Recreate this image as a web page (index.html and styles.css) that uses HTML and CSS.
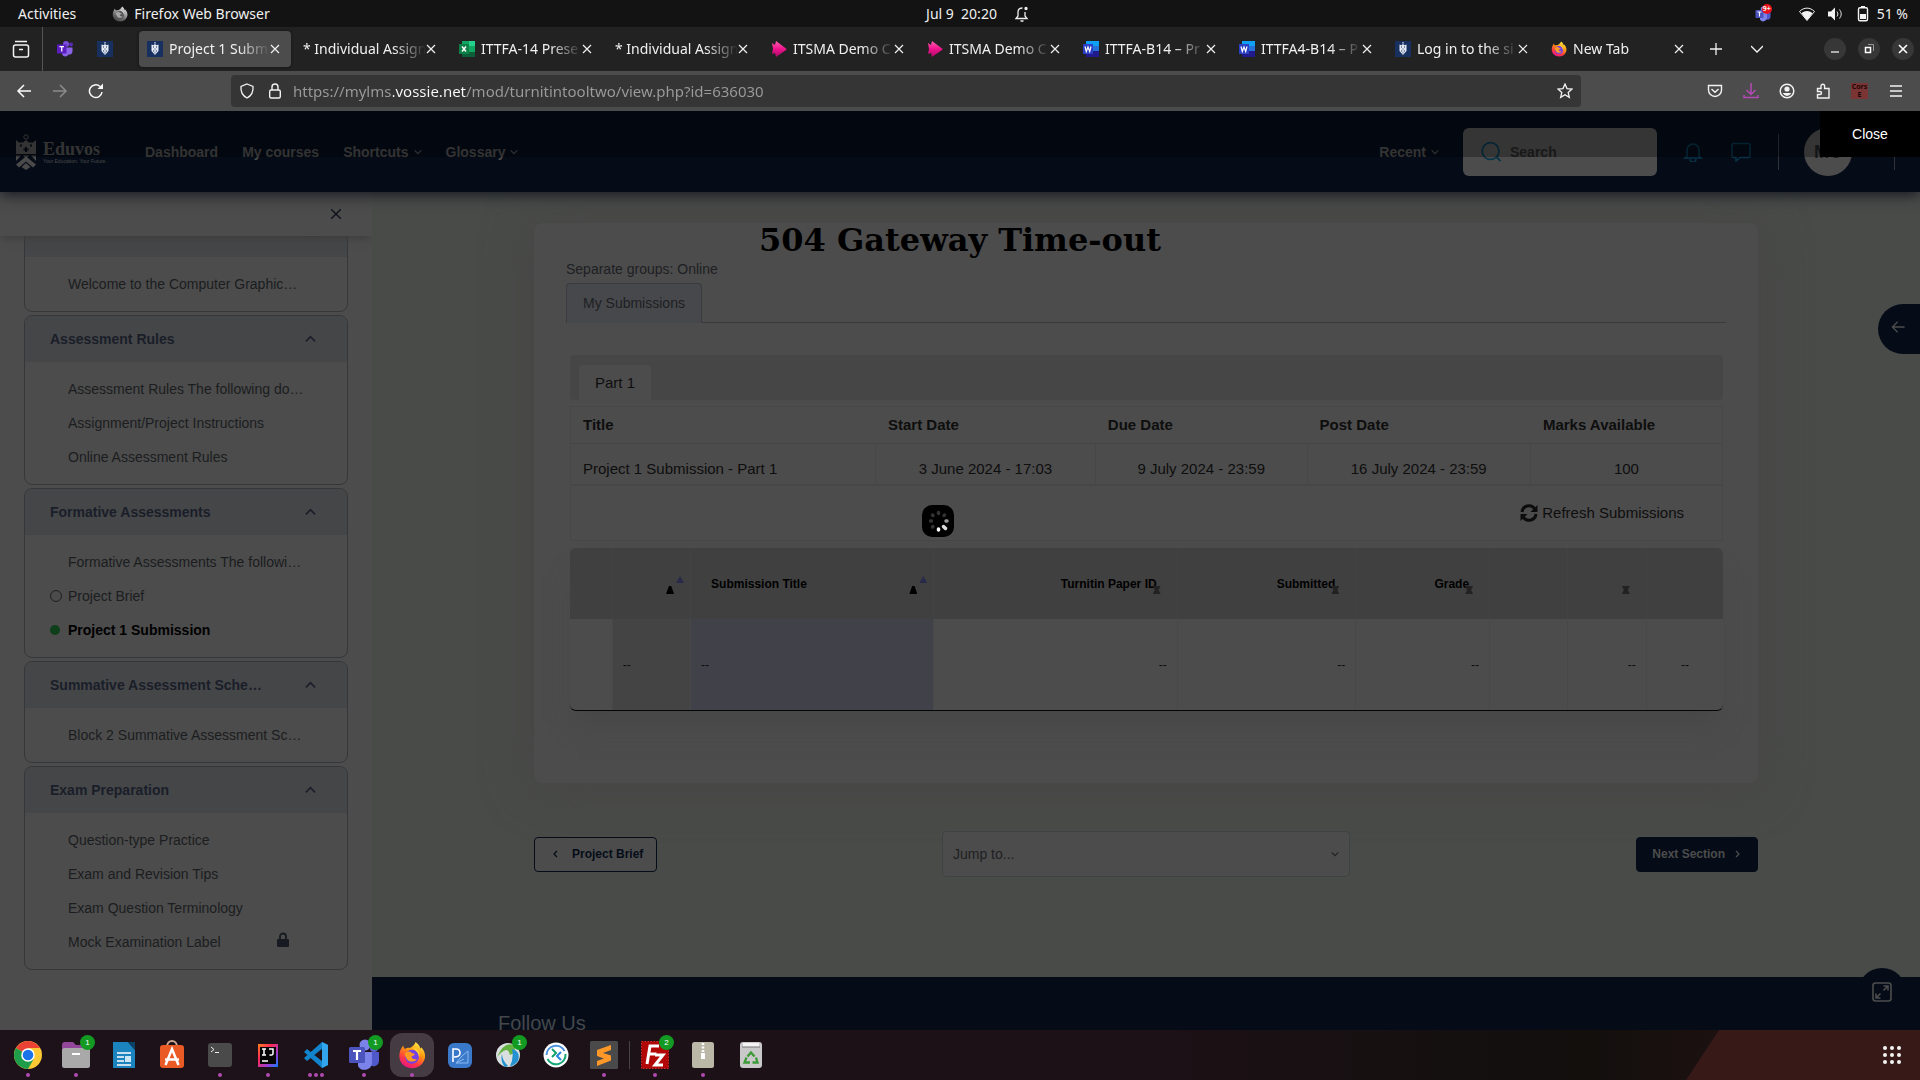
FILE: index.html
```html
<!DOCTYPE html>
<html lang="en">
<head>
<meta charset="utf-8">
<title>Project 1 Submission</title>
<link rel="stylesheet" href="styles.css">
</head>
<body>
<svg class="defs" aria-hidden="true">
  <defs>
    <linearGradient id="flame" x1="0.8" y1="0" x2="0.3" y2="1"><stop offset="0" stop-color="#fff44f"/><stop offset="0.4" stop-color="#ff980e"/><stop offset="0.75" stop-color="#ff3647"/><stop offset="1" stop-color="#e31587"/></linearGradient>
    <linearGradient id="pink" x1="0" y1="0" x2="0" y2="1"><stop offset="0" stop-color="#ff5fb0"/><stop offset="0.5" stop-color="#f0128c"/><stop offset="1" stop-color="#a80b68"/></linearGradient>
    <linearGradient id="ij" x1="0" y1="0" x2="1" y2="1"><stop offset="0" stop-color="#fc801d"/><stop offset="0.35" stop-color="#fe2857"/><stop offset="0.7" stop-color="#9a3fd5"/><stop offset="1" stop-color="#087cfa"/></linearGradient>
  </defs>
  <symbol id="x" viewBox="0 0 10 10"><path d="M1 1l8 8M9 1L1 9" fill="none" stroke="currentColor" stroke-width="1.2"/></symbol>
  <symbol id="down" viewBox="0 0 12 8"><path d="M1 1.5l5 5 5-5" fill="none" stroke="currentColor" stroke-width="1.6"/></symbol>
  <symbol id="up" viewBox="0 0 12 8"><path d="M1 6.5l5-5 5 5" fill="none" stroke="currentColor" stroke-width="1.8"/></symbol>
  <symbol id="crest" viewBox="0 0 20 36">
    <circle cx="10" cy="3" r="2.2" fill="none" stroke="currentColor"/>
    <path d="M0 6l3 2.500h4L10 6l3 2.500h4L20 6v14H0z" fill="currentColor"/>
    <path d="M4 11.500h2M14 11.500h2M10 13v5M7.500 15.500h5" stroke="#050c18" stroke-width="2"/>
    <path d="M0 21.500h5L0 27zM7 21.500h6l-3 3.500zM15 21.500h5V27zM10 22.500l10 8-3 3-7-6-7 6-3-3z" fill="currentColor"/>
    <path d="M10 29l4.500 4L10 36l-4.500-3z" fill="currentColor"/>
  </symbol>
  <symbol id="edu" viewBox="0 0 16 16"><path fill="#17305f" d="M0 0h16v16H0z"/><path d="M4.500 3.500l2 .7L8 3l1.500 1.200 2-.7V10L8 14l-3.500-4z" fill="#e4e9f2"/><circle cx="8" cy="1.900" r=".8" fill="#cdd6e6"/><path d="M6 6h1M9 6h1M7.500 8h1M6 10h1.200M8.800 10H10M8 11.500v1" stroke="#17305f"/></symbol>
  <symbol id="firefox" viewBox="0 0 32 32">
    <path fill="url(#flame)" d="M20 1c3 2 5 5 5.500 7.500 1-.5 1.200-1.500 1.200-1.500C31 12 32 17 30 22c-2.500 6-8 9-14 9C8 31 1.500 25 1.500 17c0-5 2-9 4.500-12 .2 2 1 3 2 4 1.500-1.200 4-1.500 5.500-1C15 7 19 5 20 1z"/>
    <circle cx="16" cy="18" r="8" fill="#7542e5"/><path d="M8 14c3-3 7-2 8 0 2 0 3 .6 3 1.500 0 1-2 1.500-3.500 2 0 3 3 4 6 3-2 4-9 4-11.500 0C8.500 18 7.500 16 8 14z" fill="#ff9a20"/><path d="M17 8c5 0 9 5 7 11 0-4-2-7-7-11z" fill="#ffd638"/>
  </symbol>
  <symbol id="teams" viewBox="0 0 32 32"><circle cx="26" cy="9" r="4" fill="#5b62c9"/><circle cx="17" cy="6" r="5.500" fill="#7b83eb"/><path d="M21 13h10v9a5.500 5.500 0 0 1-9 4z" fill="#5059c9"/><path d="M10 13h14v11a7.500 7.500 0 0 1-14 3z" fill="#7b83eb"/><rect x="1" y="8" width="16" height="16" rx="1.500" fill="#4b53bc"/><path d="M5 12h8M9 12v9" stroke="#fff" stroke-width="2.200"/></symbol>
  <symbol id="stream" viewBox="0 0 16 16"><path fill="url(#pink)" d="M1 2l3 2 1-4 10 7.500c.7.500.7.900 0 1.400L5 16l-1-4-3 1 1-5z"/></symbol>
  <symbol id="word" viewBox="0 0 16 16"><path fill="#0fa0f5" d="M3 0h13v5H3z"/><path fill="#2371d9" d="M3 5h13v5H3z"/><path fill="#211a8c" d="M3 10h13v6H3z"/><path fill="#2b3fc4" d="M0 3h10v10H0z"/><path d="M2 5.500l1.300 5L5 6l1.700 4.500 1.300-5" fill="none" stroke="#fff" stroke-width="1.200"/></symbol>
  <symbol id="excel" viewBox="0 0 16 16"><path fill="#10a561" d="M3 0h13v16H3z"/><path fill="#23d18a" d="M10 0h6v5h-6z"/><path fill="#0b5f38" d="M3 11h13v5H3z"/><path fill="#0c8046" d="M0 3h10v10H0z"/><path d="M3 5.500l4 5M7 5.500l-4 5" stroke="#fff" stroke-width="1.500"/></symbol>
</svg>

<header class="topbar">
  <nav class="topbar-left"><button>Activities</button><button class="app-menu"><svg class="i16 grey" viewBox="0 0 32 32"><use href="#firefox"/></svg>Firefox Web Browser</button></nav>
  <div class="clock"><time>Jul 9&nbsp; 20:20</time><svg class="i16" viewBox="0 0 16 16" fill="none" stroke="#eee" stroke-width="1.300"><path d="M11 6v4l2 2.500H2L4 10V6c0-3 2-4 4.500-4M6.500 15h3"/><circle cx="12" cy="2.500" r="1" fill="#eee"/></svg></div>
  <div class="status">
    <span class="tray"><svg class="i16" viewBox="0 0 32 32"><use href="#teams"/></svg><b>9+</b></span>
    <svg class="i16" viewBox="0 0 16 16"><path d="M.5 5.500C5 1 11 1 15.500 5.500L8 14.500z" fill="none" stroke="#eee"/><path d="M2.500 7.300c3.500-3 7.500-3 11 0L8 14.500z" fill="#f4f4f4"/></svg>
    <svg class="i16" viewBox="0 0 16 16"><path d="M1 5.500h3l4-4v13l-4-4H1z" fill="#f4f4f4"/><path d="M10 5.500q2 2.500 0 5M12.500 3.500q3.500 4.500 0 9" fill="none" stroke="#ddd"/></svg>
    <svg class="i16" viewBox="0 0 16 16"><path d="M6 0h4v2H6zM5 8h6v5H5z" fill="#f4f4f4"/><rect x="3.500" y="1.800" width="9" height="13" rx="1.500" fill="none" stroke="#f4f4f4" stroke-width="1.400"/></svg>
    <span class="charge">51 %</span>
  </div>
</header>

<div class="tabbar">
  <button class="view-tabs" aria-label="View tabs"><svg viewBox="0 0 18 18" fill="none" stroke="#f2f2f2" stroke-width="1.500"><rect x="1.500" y="5" width="15" height="12" rx="2"/><path d="M3 1.500h12M7 9.500h4"/></svg></button>
  <button class="pin" aria-label="Teams"><svg class="i16" viewBox="0 0 32 32"><circle cx="18" cy="6" r="6" fill="#7c4ddb"/><circle cx="28" cy="7" r="4" fill="#5a2ab8"/><path d="M10 13h21v8a7 7 0 0 1-8 6 7 7 0 0 1-13-1z" fill="#8a63e8"/><rect y="7" width="19" height="18" fill="#5b1fc0"/><path d="M5 11h9M9.500 11v10" stroke="#fff" stroke-width="2.500"/></svg></button>
  <button class="pin" aria-label="Eduvos"><svg class="i16"><use href="#edu"/></svg></button>
  <div class="tabs">
    <div class="tab active"><svg class="i16"><use href="#edu"/></svg><span class="tab-title">Project 1 Subm</span><button aria-label="Close tab"><svg><use href="#x"/></svg></button></div>
    <div class="tab"><span class="tab-title">* Individual Assign</span><button aria-label="Close tab"><svg><use href="#x"/></svg></button></div>
    <div class="tab"><svg class="i16"><use href="#excel"/></svg><span class="tab-title">ITTFA-14 Prese</span><button aria-label="Close tab"><svg><use href="#x"/></svg></button></div>
    <div class="tab"><span class="tab-title">* Individual Assign</span><button aria-label="Close tab"><svg><use href="#x"/></svg></button></div>
    <div class="tab"><svg class="i16"><use href="#stream"/></svg><span class="tab-title">ITSMA Demo C</span><button aria-label="Close tab"><svg><use href="#x"/></svg></button></div>
    <div class="tab"><svg class="i16"><use href="#stream"/></svg><span class="tab-title">ITSMA Demo C</span><button aria-label="Close tab"><svg><use href="#x"/></svg></button></div>
    <div class="tab"><svg class="i16"><use href="#word"/></svg><span class="tab-title">ITTFA-B14 – Pr</span><button aria-label="Close tab"><svg><use href="#x"/></svg></button></div>
    <div class="tab"><svg class="i16"><use href="#word"/></svg><span class="tab-title">ITTFA4-B14 – P</span><button aria-label="Close tab"><svg><use href="#x"/></svg></button></div>
    <div class="tab"><svg class="i16"><use href="#edu"/></svg><span class="tab-title">Log in to the si</span><button aria-label="Close tab"><svg><use href="#x"/></svg></button></div>
    <div class="tab"><svg class="i16"><use href="#firefox"/></svg><span class="tab-title">New Tab</span><button aria-label="Close tab"><svg><use href="#x"/></svg></button></div>
  </div>
  <button class="tab-tool" aria-label="New tab"><svg class="i12" viewBox="0 0 12 12"><path d="M6 0v12M0 6h12" stroke="#f2f2f2" stroke-width="1.300"/></svg></button>
  <button class="tab-tool" aria-label="List tabs"><svg class="i12" viewBox="0 0 12 8"><path d="M0 1l6 6 6-6" fill="none" stroke="#f2f2f2" stroke-width="1.300"/></svg></button>
  <div class="window-buttons">
    <button aria-label="Minimise"><svg viewBox="0 0 10 10"><path d="M1 8h8" stroke="#fff" stroke-width="1.200"/></svg></button>
    <button aria-label="Restore"><svg viewBox="0 0 10 10" fill="none" stroke="#fff"><path d="M4 .5h5.500V7" stroke="#999"/><path d="M1.500 3.500h5v5h-5z" stroke-width="1.500"/></svg></button>
    <button aria-label="Close window"><svg viewBox="0 0 10 10"><path d="M1 1l8 8M9 1L1 9" stroke="#fff" stroke-width="1.600"/></svg></button>
  </div>
</div>

<div class="toolbar">
  <button aria-label="Back"><svg class="i16" viewBox="0 0 16 16"><path d="M15 8H2M8 2L2 8l6 6" fill="none" stroke="#fbfbfb" stroke-width="1.500"/></svg></button>
  <button aria-label="Forward"><svg class="i16" viewBox="0 0 16 16"><path d="M1 8h13M8 2l6 6-6 6" fill="none" stroke="#8b8b8b" stroke-width="1.500"/></svg></button>
  <button aria-label="Reload"><svg class="i16" viewBox="0 0 16 16"><path d="M14 9a6.300 6.300 0 1 1-2-5.500" fill="none" stroke="#fbfbfb" stroke-width="1.500"/><path d="M15 .5V6H9.500z" fill="#fbfbfb"/></svg></button>
  <div class="urlbar">
    <svg class="i16" viewBox="0 0 16 16"><path d="M8 1l6 2.500C14.500 9 12 13 8 15 4 13 1.500 9 2 3.500z" fill="none" stroke="#f2f2f2" stroke-width="1.300"/></svg>
    <svg class="i16" viewBox="0 0 16 16"><path d="M5 7V4a3 3 0 0 1 6 0v3" fill="none" stroke="#f2f2f2" stroke-width="1.400"/><rect x="2.700" y="7" width="10.600" height="8" rx="1.500" fill="none" stroke="#f2f2f2" stroke-width="1.400"/></svg>
    <input type="text" aria-label="Address" value="https://mylms.vossie.net/mod/turnitintooltwo/view.php?id=636030">
    <svg class="i16" viewBox="0 0 16 16"><path d="M8 1l2 4.600 5 .5-3.800 3.300 1.100 4.900L8 11.700l-4.300 2.600 1.100-4.900L1 6.100l5-.5z" fill="none" stroke="#f2f2f2" stroke-width="1.300"/></svg>
  </div>
  <button aria-label="Pocket"><svg class="i16" viewBox="0 0 16 16" fill="none" stroke="#f2f2f2" stroke-width="1.400"><path d="M1.500 2.500h13V7a6.500 6.500 0 0 1-13 0zM4.500 6L8 9.300 11.500 6"/></svg></button>
  <button aria-label="Downloads"><svg class="i16" viewBox="0 0 16 16" fill="none" stroke="#b449b4" stroke-width="1.500"><path d="M8 0v11M3.500 7L8 11.500 12.500 7M1 12v2.500h14V12"/></svg></button>
  <button aria-label="Account"><svg class="i16" viewBox="0 0 16 16"><circle cx="8" cy="8" r="6.800" fill="none" stroke="#f2f2f2" stroke-width="1.500"/><circle cx="8" cy="6" r="2.600" fill="#f2f2f2"/><path d="M3.700 10h8.600q-1.500 3-4.300 3t-4.300-3z" fill="#f2f2f2"/></svg></button>
  <button aria-label="Extensions"><svg class="i16" viewBox="0 0 16 16"><path d="M2.500 5.500H6V3a1.800 1.800 0 0 1 3.600 0v2.500H14V15H2.500v-3.500H5a1.500 1.500 0 0 0 0-3H2.500z" fill="none" stroke="#f2f2f2" stroke-width="1.400"/></svg></button>
  <button class="cors">Cors<br>E</button>
  <button aria-label="Menu"><svg class="i16" viewBox="0 0 16 16"><path d="M2 3h12M2 8h12M2 13h12" stroke="#f2f2f2" stroke-width="1.500"/></svg></button>
</div>

<div class="page">
  <header class="site-header">
    <a class="logo" href="#" aria-label="Eduvos home"><svg><use href="#crest"/></svg><span><strong>Eduvos</strong><small>Your Education. Your Future.</small></span></a>
    <nav class="site-nav"><a href="#">Dashboard</a><a href="#">My courses</a><a href="#">Shortcuts<svg><use href="#down"/></svg></a><a href="#">Glossary<svg><use href="#down"/></svg></a></nav>
    <a class="recent" href="#">Recent<svg><use href="#down"/></svg></a>
    <label class="search"><svg viewBox="0 0 22 22"><circle cx="10" cy="10" r="8.800" fill="none" stroke="#09354a" stroke-width="1.800"/><path d="M16.500 16.500l4 4" stroke="#09354a" stroke-width="2"/></svg><input type="search" placeholder="Search" aria-label="Search"></label>
    <button class="head-icon" aria-label="Notifications"><svg viewBox="0 0 20 20"><path d="M4 14V8a6 6 0 0 1 12 0v6l2 2H2zM7 17a3 3 0 0 0 6 0"/></svg></button>
    <button class="head-icon" aria-label="Messages"><svg viewBox="0 0 20 20"><path d="M2.500 1.500h15q1.500 0 1.500 1.500v11q0 1.500-1.500 1.500H9L5 19v-3.500H2.500Q1 15.500 1 14V3q0-1.500 1.500-1.500z"/></svg></button>
    <button class="avatar">MC</button>
    <div class="dim"><button>Close</button></div>
  </header>

  <div class="columns">
    <aside class="sidebar">
      <div class="sidebar-top"><button aria-label="Close course index"><svg><use href="#x"/></svg></button></div>
      <nav class="index">
        <section><h2><span></span><svg><use href="#up"/></svg></h2><ul><li><a href="#">Welcome to the Computer Graphic…</a></li></ul></section>
        <section><h2><span>Assessment Rules</span><svg><use href="#up"/></svg></h2><ul><li><a href="#">Assessment Rules The following do…</a></li><li><a href="#">Assignment/Project Instructions</a></li><li><a href="#">Online Assessment Rules</a></li></ul></section>
        <section><h2><span>Formative Assessments</span><svg><use href="#up"/></svg></h2><ul><li><a href="#">Formative Assessments The followi…</a></li><li class="todo"><a href="#">Project Brief</a></li><li class="done"><a href="#">Project 1 Submission</a></li></ul></section>
        <section><h2><span>Summative Assessment Sche…</span><svg><use href="#up"/></svg></h2><ul><li><a href="#">Block 2 Summative Assessment Sc…</a></li></ul></section>
        <section><h2><span>Exam Preparation</span><svg><use href="#up"/></svg></h2><ul><li><a href="#">Question-type Practice</a></li><li><a href="#">Exam and Revision Tips</a></li><li><a href="#">Exam Question Terminology</a></li><li class="locked"><a href="#">Mock Examination Label</a><svg viewBox="0 0 12 16"><path d="M3 7V4.500a3 3 0 0 1 6 0V7" fill="none" stroke="#171a20" stroke-width="1.800"/><rect y="7" width="12" height="8" rx="1" fill="#171a20"/></svg></li></ul></section>
      </nav>
    </aside>

    <main class="main">
      <article class="card">
        <p class="groups">Separate groups: Online</p>
        <nav class="card-tabs"><a href="#">My Submissions</a></nav>
        <div class="submission">
          <div class="parts"><button>Part 1</button></div>
          <table class="dates">
            <colgroup><col class="d1"><col class="d2"><col class="d3"><col class="d4"><col class="d5"></colgroup>
            <thead><tr><th>Title</th><th>Start Date</th><th>Due Date</th><th>Post Date</th><th>Marks Available</th></tr></thead>
            <tbody>
              <tr><td>Project 1 Submission - Part 1</td><td>3 June 2024 - 17:03</td><td>9 July 2024 - 23:59</td><td>16 July 2024 - 23:59</td><td>100</td></tr>
              <tr class="refresh"><td colspan="5"><button><svg viewBox="0 0 18 18"><path d="M2 8a7 7 0 0 1 12.500-3.500M16 10a7 7 0 0 1-12.500 3.500" fill="none" stroke="#0c0c0c" stroke-width="3"/><path d="M17.500 1v7h-7zM.5 17v-7h7z" fill="#0c0c0c"/></svg>Refresh Submissions</button></td></tr>
            </tbody>
          </table>
          <table class="papers">
            <colgroup><col class="p1"><col class="p2"><col class="p3"><col class="p3"><col class="p5"><col class="p6"><col class="p2"><col class="p2"><col class="p9"></colgroup>
            <thead><tr><th></th><th class="sorted"><i></i></th><th class="sorted left">Submission Title<i></i></th><th class="sortable">Turnitin Paper ID<i></i></th><th class="sortable">Submitted<i></i></th><th class="sortable">Grade<i></i></th><th></th><th class="sortable"><i></i></th><th></th></tr></thead>
            <tbody><tr><td></td><td class="left shade">--</td><td class="left violet">--</td><td>--</td><td>--</td><td>--</td><td></td><td>--</td><td class="center">--</td></tr></tbody>
          </table>
        </div>
      </article>
      <div class="pager">
        <div><a class="prev" href="#"><svg viewBox="0 0 6 8"><path d="M5 1L2 4l3 3"/></svg>Project Brief</a></div>
        <div class="jump"><select aria-label="Jump to"><option>Jump to...</option></select><svg><use href="#down"/></svg></div>
        <div><a class="next" href="#">Next Section<svg viewBox="0 0 6 8"><path d="M1 1l3 3-3 3"/></svg></a></div>
      </div>
      <footer class="site-footer"><h3>Follow Us</h3></footer>
      <button class="drawer" aria-label="Open block drawer"><svg viewBox="0 0 16 16"><path d="M15 8H1M7 2L1 8l6 6"/></svg></button>
      <button class="expand" aria-label="Full screen"><svg viewBox="0 0 20 20"><rect x="1" y="1" width="18" height="18" rx="2.500"/><path d="M11.500 4H16v4.500M16 4l-4.500 4.500M8.500 16H4v-4.500M4 16l4.500-4.500"/></svg></button>
    </main>
  </div>
  <h1 class="error">504 Gateway Time-out</h1>
  <div class="spinner" role="status" aria-label="Loading"><svg viewBox="0 0 32 32" stroke-width="3.500" stroke-linecap="round"><path stroke="#333" d="M16.500 7.500v1M10.500 10l.5.500M8.500 16h1M10.500 22l.5-.5M22.500 10l-.5.500"/><path stroke="#999" d="M24 16h1"/><path stroke="#ddd" d="M21.500 21.500l2 2"/><path stroke="#fff" d="M16.500 24v1"/></svg></div>
</div>

<nav class="dock">
  <a href="#" aria-label="Chrome" class="run"><svg viewBox="0 0 32 32"><circle cx="16" cy="16" r="14" fill="#fcc934"/><path d="M16 16L3.900 9A14 14 0 0 1 28.100 9H16z" fill="#ea4335"/><path d="M3.900 9A14 14 0 0 0 16 30l6-10.500-6-3.500z" fill="#1e9e4a"/><circle cx="16" cy="16" r="6.800" fill="#fff"/><circle cx="16" cy="16" r="5.300" fill="#1a73e8"/></svg></a>
  <a href="#" aria-label="Files" class="run"><svg viewBox="0 0 32 32"><path d="M2 6q0-3 3-3h8l3 3h11q3 0 3 3v6H2z" fill="#93479b"/><rect x="2" y="9" width="28" height="20" rx="2.500" fill="#a9a9a9"/><path d="M12 15h8" stroke="#fff" stroke-width="2"/></svg><b>1</b></a>
  <a href="#" aria-label="Writer"><svg viewBox="0 0 32 32"><path d="M5 3h15l7 8v18H5z" fill="#1b83bd"/><path d="M20 3h7v8z" fill="#0a4267"/><path d="M9 14h14M9 18h7M9 22h7M9 26h14" stroke="#fff" stroke-width="1.500"/><path d="M17 17h6v6h-6z" fill="#cbe6f5"/></svg></a>
  <a href="#" aria-label="Software"><svg viewBox="0 0 32 32"><path d="M11 8c0-8 10-8 10 0" fill="none" stroke="#c9a58d" stroke-width="2"/><rect x="4" y="6" width="24" height="23" rx="3" fill="#ea5a25"/><path d="M9.500 26L16 10l6.500 16M9 20.500h14" fill="none" stroke="#fff" stroke-width="2.500"/></svg></a>
  <a href="#" aria-label="Terminal" class="run"><svg viewBox="0 0 32 32"><rect x="4" y="4" width="24" height="24" rx="3" fill="#4a4a4a"/><path d="M7 8l3 2.500L7 13M11 13.500h4" fill="none" stroke="#eee"/></svg></a>
  <a href="#" aria-label="IntelliJ" class="run"><svg viewBox="0 0 32 32"><path d="M6 5h20v23H6z" fill="url(#ij)"/><path d="M8 8h16v17H8z" fill="#050505"/><path d="M10 10h4M12 10v6M10 16h4M17 10h4v4.500q0 2-3.500 1.500M10 22h6" fill="none" stroke="#fff" stroke-width="1.500"/></svg></a>
  <a href="#" aria-label="VS Code" class="run three"><svg viewBox="0 0 32 32"><path d="M22 3l6 3v20l-6 3L4 13l3-3 16 13V9L7 22l-3-3z" fill="#1184cb"/><path d="M22 3l6 3v20l-6 3z" fill="#32a5ec"/></svg></a>
  <a href="#" aria-label="Teams" class="run"><svg viewBox="0 0 32 32"><use href="#teams"/></svg><b>1</b></a>
  <a href="#" aria-label="Firefox" class="run current"><svg viewBox="0 0 32 32"><use href="#firefox"/></svg></a>
  <a href="#" aria-label="PostgreSQL"><svg viewBox="0 0 32 32"><rect x="4" y="4" width="24" height="25" rx="6" fill="#3a79ca"/><path d="M9 23V10h3q4 0 4 4t-6 4" fill="none" stroke="#fff" stroke-width="1.600"/><path d="M18 17l6-5v12H12zM12 24l8-4" fill="none" stroke="#8bb9ee"/></svg></a>
  <a href="#" aria-label="Globe"><svg viewBox="0 0 32 32"><circle cx="16" cy="16" r="12" fill="#d9dfdf"/><path d="M5 18Q12 2 22 6q3 8-4 10-1-5-4-5-4 1-9 7z" fill="#61b23e"/><path d="M20 10q9 2 6 12-4 5-8 5 4-8 2-17zM10 15q0 6 6 12l-3 1q-5-6-3-13z" fill="#2491d0"/></svg><b>1</b></a>
  <a href="#" aria-label="Remote"><svg viewBox="0 0 32 32"><circle cx="16" cy="16" r="12.500" fill="#fff"/><path d="M6.500 16a9.500 9.500 0 0 1 18-4" fill="none" stroke="#4c91df" stroke-width="2"/><path d="M25.500 15a9.500 9.500 0 0 1-18 5" fill="none" stroke="#18a878" stroke-width="2"/><path d="M12 10l4 4-4 4" fill="none" stroke="#12a06d" stroke-width="2"/><path d="M21 13l-4 4 4 4" fill="none" stroke="#2685df" stroke-width="2"/></svg></a>
  <a href="#" aria-label="Sublime Text" class="run"><svg viewBox="0 0 32 32"><rect x="2" y="2" width="28" height="28" rx="1.500" fill="#4a4a4a"/><path d="M9 11l14-5v5l-8 3 8 2.500v5L9 27v-5l7-2.500-7-2.500z" fill="#ff9828"/></svg></a>
  <hr>
  <a href="#" aria-label="FileZilla" class="run"><svg viewBox="0 0 32 32"><rect x="2.500" y="2.500" width="27" height="27" fill="#b10707" stroke="#d42a2a" stroke-dasharray="1.500 1.500"/><path d="M8 25L11 7h9M9.500 15h8M16 16h8l-8 10h8" fill="none" stroke="#fff" stroke-width="3"/></svg><b>2</b></a>
  <a href="#" aria-label="Archive" class="run"><svg viewBox="0 0 32 32"><rect x="5" y="3" width="22" height="26" rx="2.500" fill="#bcb8a8"/><path d="M16 4v13" stroke="#fff" stroke-width="2.500" stroke-dasharray="2 1.500"/><rect x="14" y="14" width="4" height="6" fill="#fff"/></svg></a>
  <a href="#" aria-label="Trash"><svg viewBox="0 0 32 32"><rect x="5" y="3" width="22" height="26" rx="3" fill="#c9c9c9"/><path d="M8 4h16v4H8z" fill="#f4f4f4"/><path d="M7 8h18" stroke="#777"/><path d="M12.500 17.500l3.500-4 3.500 4M21 18.500l1.500 5h-5M15 23.500H9.500l2-5" fill="none" stroke="#3d9a38" stroke-width="2.300"/></svg></a>
  <button class="apps" aria-label="Show applications"><svg viewBox="0 0 18 18" fill="#f4f4f4"><circle cx="2" cy="2" r="2"/><circle cx="9" cy="2" r="2"/><circle cx="16" cy="2" r="2"/><circle cx="2" cy="9" r="2"/><circle cx="9" cy="9" r="2"/><circle cx="16" cy="9" r="2"/><circle cx="2" cy="16" r="2"/><circle cx="9" cy="16" r="2"/><circle cx="16" cy="16" r="2"/></svg></button>
</nav>
</body>
</html>
```
FILE: styles.css
```css
*, *::before, *::after { box-sizing: border-box; }
body { margin: 0; height: 100vh; display: flex; flex-direction: column; overflow: hidden; background: #4c4c4c; font: 14px/20px "Liberation Sans", Arial, sans-serif; }
button { margin: 0; padding: 0; border: 0; background: none; color: inherit; font: inherit; }
a { color: inherit; text-decoration: none; }
h1, h2, h3, p, ul { margin: 0; padding: 0; list-style: none; }
svg { display: block; flex: none; }
.defs { position: absolute; width: 0; height: 0; }
.i16 { width: 16px; height: 16px; }
.i12 { width: 12px; height: 12px; }
.grey { filter: grayscale(1); }

/* desktop top bar */
.topbar, .tabbar, .toolbar { flex: none; display: flex; align-items: center; color: #f0f0f0; font: 14px/20px "Noto Sans", sans-serif; }
.topbar { display: grid; grid-template-columns: 1fr auto 1fr; height: 27px; padding: 0 12px 0 18px; background: #131313; }
.topbar-left, .clock, .status { display: flex; align-items: center; }
.topbar-left { gap: 36px; }
.app-menu { display: flex; align-items: center; gap: 6px; }
.clock { gap: 17px; padding-left: 30px; }
.status { justify-content: flex-end; gap: 12px; }
.charge { margin-left: -6px; }
.tray { position: relative; margin-right: 16px; }
.tray b { position: absolute; top: -2px; right: -1px; width: 10px; border-radius: 5px; background: #e8131c; font-size: 7px; line-height: 10px; text-align: center; }

/* browser tabs */
.tabbar { height: 44px; padding-right: 6px; background: #222; }
.view-tabs { display: grid; place-items: center; width: 43px; height: 44px; border-right: 1px solid #555; }
.view-tabs svg { width: 18px; height: 18px; }
.pin { display: grid; place-items: center; width: 40px; margin-left: 2px; }
.pin + .pin { margin: 0 14px 0 0; }
.tabs { flex: 1; display: flex; gap: 4px; max-width: 1556px; }
.tab { flex: 1 1 0; display: flex; align-items: center; min-width: 0; height: 36px; padding: 0 11px 0 8px; border-radius: 4px; }
.tab.active { background: #4c4c4c; box-shadow: 0 0 3px #111; }
.tab > .i16 { margin-right: 6px; }
.tab-title { flex: 1; white-space: nowrap; mask-image: linear-gradient(to left, transparent, #000 32px); }
.tab button svg { width: 10px; height: 10px; }
.tab-tool { display: grid; place-items: center; width: 41px; }
.window-buttons { display: flex; gap: 12px; margin-left: auto; }
.window-buttons button { display: grid; place-items: center; width: 22px; height: 22px; border-radius: 50%; background: #373737; }
.window-buttons svg { width: 10px; height: 10px; }

/* navigation toolbar */
.toolbar { height: 40px; padding: 0 6px; background: #4c4c4c; }
.toolbar > button { display: grid; place-items: center; flex: none; width: 36px; height: 32px; }
.urlbar { flex: 1; display: flex; align-items: center; gap: 12px; height: 32px; margin: 0 116px 0 117px; padding: 0 8px; border-radius: 4px; background: #353535; }
.urlbar input { flex: 1; min-width: 0; margin-left: -2px; padding: 0; border: 0; outline: 0; color: transparent; background: linear-gradient(90deg, #9b9b9b 100px, #fbfbfb 100px 173px, #9b9b9b 173px); background-clip: text; -webkit-background-clip: text; font: 15px/20px "Noto Sans", sans-serif; }
.toolbar .cors { width: 17px; height: 16px; margin: 0 10px; background: #7a3434; color: #1b0808; font-size: 7px; line-height: 8px; font-weight: bold; }

/* site header */
.page { position: relative; flex: 1; min-height: 0; display: flex; flex-direction: column; overflow: hidden; }
.site-header { position: relative; z-index: 3; flex: none; display: flex; align-items: center; height: 81px; padding: 0 25px 0 16px; background: #050c18; box-shadow: 0 2px 14px #10131c; color: #4a4a4a; font-weight: bold; }
.logo { display: flex; align-items: center; gap: 7px; width: 129px; }
.logo svg { width: 20px; height: 36px; }
.logo strong { display: block; font: bold 18px/18px "Liberation Serif", serif; }
.logo small { display: block; font-size: 5px; line-height: 6px; font-weight: normal; white-space: nowrap; }
.site-nav { display: flex; gap: 24px; }
.site-nav a, .recent { display: flex; align-items: center; gap: 5px; }
.site-nav a svg, .recent svg { width: 8px; height: 6px; }
.recent { margin-left: auto; }
.search { display: flex; align-items: center; gap: 8px; width: 194px; height: 48px; margin: 0 24px; padding: 0 18px; border-radius: 6px; background: #4c4c4c; }
.search svg { width: 21px; height: 22px; }
.search input { flex: 1; min-width: 0; padding: 0; border: 0; outline: 0; background: none; font: inherit; }
.search input::placeholder { color: #242424; opacity: 1; }
.head-icon { display: grid; place-items: center; width: 24px; height: 36px; }
.head-icon + .head-icon { margin: 0 25px 0 24px; }
.head-icon svg { width: 20px; height: 20px; fill: none; stroke: #083246; stroke-width: 1.600; }
.avatar { order: 2; width: 48px; height: 48px; margin: 0 42px 0 25px; border-radius: 50%; background: #4c4c4c; color: #1d1f22; font-size: 18px; }
.site-header::before, .site-header::after { content: ""; order: 1; width: 1px; height: 36px; background: #303236; }
.site-header::after { order: 3; }
.dim { position: absolute; inset: 0 0 auto; display: flex; justify-content: flex-end; background: rgba(0, 0, 0, 0.300); }
.dim button { width: 100px; height: 46px; background: #000; color: #fff; font-weight: normal; }

/* course index */
.columns { flex: 1; min-height: 0; display: flex; }
.sidebar { flex: none; width: 372px; overflow: hidden; background: #4c4c4c; }
.sidebar-top { position: relative; z-index: 1; display: flex; align-items: center; justify-content: flex-end; height: 44px; padding-right: 30px; background: #4c4c4c; box-shadow: 0 4px 8px -2px #3c3c3c; color: #0f121b; }
.sidebar-top svg { width: 12px; height: 12px; }
.index { display: grid; gap: 3px; margin-top: -26px; padding: 0 24px; color: #1b1d1f; }
.index section { border: 1px solid #36373a; border-radius: 8px; overflow: hidden; }
.index h2 { display: flex; align-items: center; justify-content: space-between; height: 46px; padding: 0 31px 0 25px; background: #454648; color: #1a1e29; font-size: 14px; }
.index h2 svg { width: 11px; height: 8px; }
.index ul { padding: 10px 0 10px 25px; }
.index li { display: flex; align-items: center; height: 34px; padding-left: 18px; }
.index .todo, .index .done { padding-left: 0; }
.todo::before, .done::before { content: ""; width: 12px; height: 12px; margin-right: 6px; border: 1px solid #1c1e21; border-radius: 50%; }
.done::before { width: 10px; height: 10px; margin-right: 8px; border: 0; background: #0e3e1a; }
.done { color: #000; font-weight: bold; }
.locked svg { width: 12px; height: 16px; margin: -4px 0 0 56px; }

/* main column */
.main { position: relative; flex: 1; min-width: 0; overflow: hidden; background: #494b49; }
.card { min-height: 560px; margin: 31px 162px 48px; padding: 36px 32px 0; border-radius: 8px; background: #4c4c4c; box-shadow: 0 4px 48px #464545; color: #1e2023; }
.groups { margin-bottom: 4px; }
.card-tabs { display: flex; border-bottom: 1px solid #393a3d; }
.card-tabs a { height: 40px; margin-bottom: -1px; padding: 9px 16px; border: 1px solid #393b40; border-bottom: 0; border-radius: 4px 4px 0 0; background: #47484b; }
.submission { margin: 32px 3px 0 4px; color: #0e0e0e; font-size: 15px; }
.parts { height: 45px; padding: 10px 9px 0; border-radius: 4px; background: #464646; }
.parts button { height: 35px; padding: 0 16px; border-radius: 4px 4px 0 0; background: #4c4c4c; }
table { width: 100%; table-layout: fixed; border-collapse: separate; border-spacing: 0; }
.dates { margin-top: 6px; border: 1px solid #474747; }
.dates th { height: 37px; padding: 0 12px; border-bottom: 1px solid #464646; text-align: left; }
.dates td { height: 42px; padding: 9px 12px 0; border-right: 1px solid #474747; border-bottom: 2px solid #474747; text-align: center; }
.dates td:first-child { text-align: left; }
.dates td:last-child { border-right: 0; }
.dates .refresh td { height: 54px; padding: 0 38px 0 0; border: 0; }
.refresh button { display: flex; align-items: center; gap: 4px; margin-left: auto; }
.refresh svg { width: 18px; height: 18px; }
.d1 { width: 26.500%; }
.d2 { width: 19.100%; }
.d3 { width: 18.400%; }
.d4 { width: 19.400%; }
.d5 { width: 16.600%; }
.papers { margin-top: 7px; border-bottom: 1px solid #050505; border-radius: 6px; overflow: hidden; font-size: 12px; line-height: 16px; box-shadow: 0 20px 24px -8px #474747; }
.papers th { position: relative; height: 71px; padding: 0 20px; border-right: 1px solid #434345; background: #404040; color: #000; text-align: right; }
.papers td { height: 91px; padding: 0 10px; border-right: 1px solid #484848; text-align: right; }
.papers th:last-child, .papers td:last-child { border-right: 0; }
.papers .left { text-align: left; }
.papers .center { text-align: center; }
.papers .shade { background: #444; }
.papers .violet { background: #41414a; }
.papers i { position: absolute; right: 16px; top: 38px; width: 8px; height: 8px; background: #222; clip-path: polygon(0 0, 100% 0, 75% 50%, 100% 100%, 0 100%, 25% 50%); }
.papers .sorted i { background: #000; clip-path: polygon(35% 0, 65% 0, 100% 100%, 0 100%); }
.papers .sorted::after { content: ""; position: absolute; right: 6px; top: 28px; width: 8px; height: 7px; background: #29294a; clip-path: polygon(50% 0, 100% 100%, 0 100%); }
.p1 { width: 3.700%; }
.p2 { width: 6.800%; }
.p3 { width: 21.100%; }
.p5 { width: 15.500%; }
.p6 { width: 11.600%; }
.p9 { width: 6.600%; }

/* pager and footer */
.pager { display: grid; grid-template-columns: 1fr 1fr 1fr; align-items: center; margin: 0 162px 100px; }
.pager div:last-child { display: flex; justify-content: flex-end; }
.prev, .next { display: inline-flex; align-items: center; gap: 14px; height: 35px; padding: 0 13px 0 17px; border: 1px solid #050c18; border-radius: 4px; color: #050c18; background: #4c4c4c; font-size: 12px; font-weight: bold; }
.next { gap: 10px; padding: 0 16px 0 15px; background: #050c18; color: #4c4c4c; }
.prev svg, .next svg { width: 6px; height: 8px; fill: none; stroke: currentColor; stroke-width: 1.300; }
.jump { position: relative; }
.jump select { appearance: none; display: block; width: 100%; height: 46px; padding: 0 10px; border: 1px solid #404142; border-radius: 4px; background: #4c4c4c; color: #1e2023; font: inherit; }
.jump svg { position: absolute; right: 11px; top: 20px; width: 8px; height: 6px; color: #1e2023; }
.site-footer { height: 300px; padding: 34px 126px; background: #050c18; color: #44474b; }
.site-footer h3 { font-size: 20px; line-height: 24px; font-weight: normal; }
.drawer { position: absolute; right: 0; top: 112px; width: 42px; height: 50px; padding: 0 0 4px 13px; border-radius: 25px 0 0 25px; background: #050c18; }
.drawer svg { width: 15px; height: 14px; fill: none; stroke: #4c4c4c; stroke-width: 1.500; }
.expand { position: absolute; right: 14px; bottom: 14px; display: grid; place-items: center; width: 48px; height: 48px; border-radius: 50%; background: #050c18; }
.expand svg { width: 20px; height: 20px; fill: none; stroke: #4c4c4c; stroke-width: 1.600; }

/* layers over the whole page */
.error { position: absolute; z-index: 4; inset: 110px 0 auto; color: #000; font: bold 32px/38px "DejaVu Serif", serif; text-align: center; }
.spinner { position: absolute; z-index: 4; left: 48%; top: 394px; width: 32px; height: 32px; border-radius: 10px; background: #000; }
.spinner svg { fill: none; }

/* dock */
.dock { position: relative; flex: none; display: flex; align-items: center; height: 50px; padding: 0 19px 0 4px; background: linear-gradient(90deg, #1e121a, #1c1116 60%, #120f0d 82%, #1c1110 90%); }
.dock::before { content: ""; position: absolute; right: 0; top: 0; width: 234px; height: 50px; background: #371a17; clip-path: polygon(33px 0, 100% 0, 100% 100%, 0 100%); }
.dock a { position: relative; display: grid; place-items: center; width: 48px; height: 50px; }
.dock a > svg { position: relative; width: 32px; height: 32px; }
.dock .current > svg { width: 28px; height: 28px; }
.dock b { position: absolute; right: 5px; top: 5px; width: 15px; height: 15px; border-radius: 50%; background: #129a22; color: #fff; font-size: 8px; line-height: 15px; text-align: center; font-weight: normal; }
.dock .run::after { content: ""; position: absolute; left: 22px; bottom: 3px; width: 4px; height: 4px; border-radius: 50%; background: #b04ab0; }
.dock .three::after { box-shadow: -6px 0 #b04ab0, 6px 0 #b04ab0; }
.dock .current::before { content: ""; position: absolute; inset: 3px 2px; border-radius: 12px; background: #443c42; }
.dock hr { width: 1px; height: 28px; margin: 0 1px; border: 0; background: #444; }
.apps { position: relative; margin-left: auto; }
.apps svg { width: 18px; height: 18px; }
```
